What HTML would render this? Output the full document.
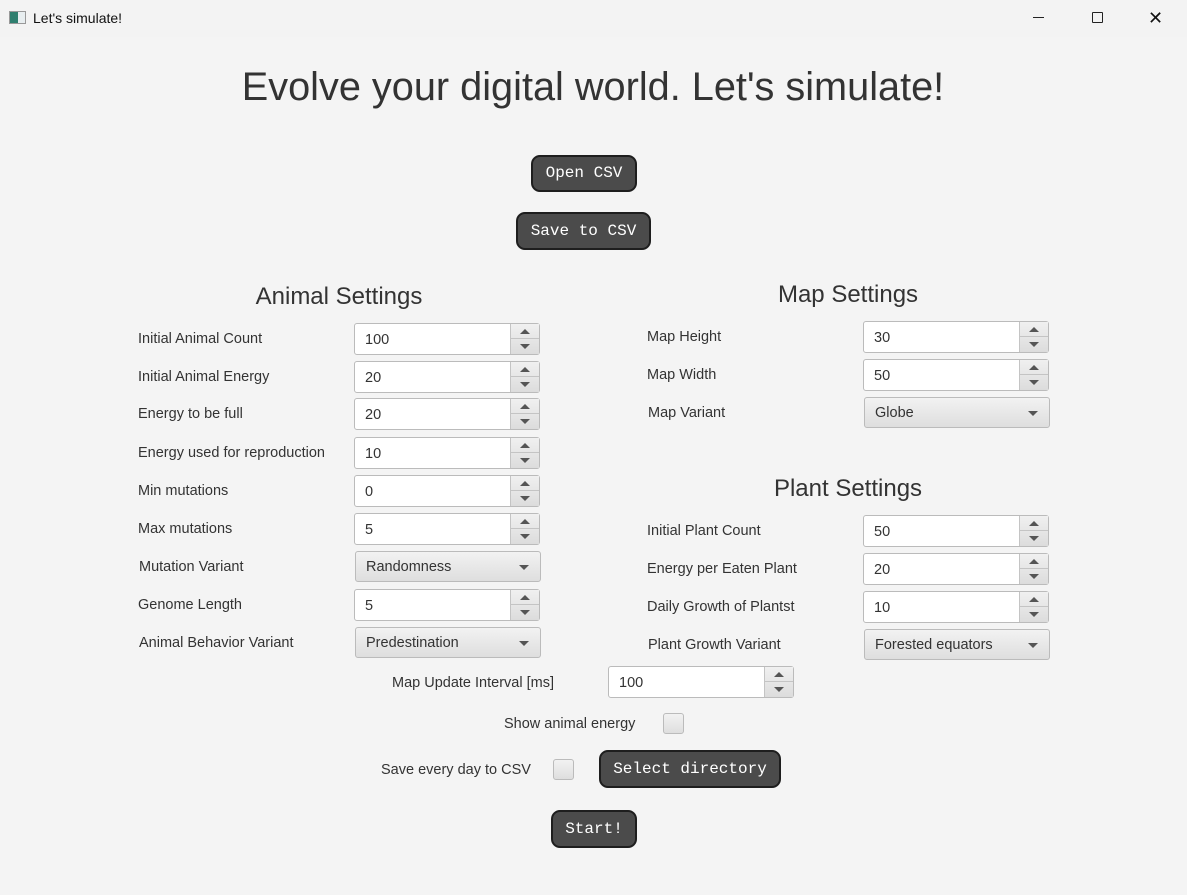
<!DOCTYPE html>
<html><head><meta charset="utf-8"><style>
*{box-sizing:border-box;margin:0;padding:0}
body{width:1187px;height:895px;background:#f4f4f4;font-family:"Liberation Sans","DejaVu Sans",sans-serif;position:relative;overflow:hidden;color:#333}
.tb{position:absolute;left:0;top:0;width:1187px;height:37px;background:#f3f3f3;font-size:14px;color:#111}
.a{position:absolute}
.lbl{position:absolute;font-size:14.5px;color:#333;white-space:nowrap;margin-top:1px}
.h{position:absolute;font-size:24px;color:#333;white-space:nowrap;transform:translateX(-50%)}
.sp{position:absolute;width:186px;height:32px;border:1px solid #bbb;border-radius:3px;background:#fff;}
.sp span{position:absolute;left:10px;top:8px;font-size:14.5px;color:#333}
.sp .ar{position:absolute;right:0;top:0;width:29px;height:30px;border-left:1px solid #c4c4c4;background:linear-gradient(#f0f0f0,#dcdcdc)}
.sp .ar:after{content:"";position:absolute;left:0;right:0;top:14px;border-top:1px solid #c4c4c4}
.up,.dn{position:absolute;left:9px;width:0;height:0;border-left:5px solid transparent;border-right:5px solid transparent}
.up{top:5px;border-bottom:5px solid #555}
.dn{top:20px;border-top:5px solid #555}
.cb{position:absolute;width:186px;height:31px;border:1px solid #bbb;border-radius:3px;background:linear-gradient(#f2f2f2,#dedede)}
.cb span{position:absolute;left:10px;top:7px;font-size:14.5px;color:#333}
.cb i{position:absolute;right:11px;top:13px;border-left:5px solid transparent;border-right:5px solid transparent;border-top:5px solid #555}
.btn{position:absolute;background:#4b4b4b;border:2px solid #1e1e1e;border-radius:9px;color:#fff;font-family:"Liberation Mono","DejaVu Sans Mono",monospace;font-size:16px;text-align:center}
.chk{position:absolute;width:21px;height:21px;border:1px solid #bbb;border-radius:3px;background:linear-gradient(#f2f2f2,#dedede)}
</style></head><body>
<div class="tb">
<div class="a" style="left:9px;top:11px;width:17px;height:13px;border:1px solid #999;background:linear-gradient(90deg,#2f7f6f 0 55%,#e8eef0 55%)"></div>
<div class="a" style="left:33px;top:10px">Let's simulate!</div>
<div class="a" style="left:1033px;top:17px;width:11px;border-top:1px solid #222"></div>
<div class="a" style="left:1092px;top:12px;width:11px;height:11px;border:1px solid #222;border-radius:1px"></div>
<div class="a" style="left:1148px;top:8px;font-size:18px;font-weight:300">✕</div>
</div>
<div class="h" style="left:593px;top:65px;font-size:39.7px">Evolve your digital world. Let's simulate!</div>
<div class="btn" style="left:531px;top:155px;width:106px;height:37px;line-height:33px">Open CSV</div>
<div class="btn" style="left:516px;top:212px;width:135px;height:38px;line-height:34px">Save to CSV</div>

<div class="h" style="left:339px;top:283px">Animal Settings</div>
<div class="h" style="left:848px;top:281px">Map Settings</div>
<div class="h" style="left:848px;top:475px">Plant Settings</div>

<div class="lbl" style="left:138px;top:330px">Initial Animal Count</div>
<div class="sp" style="left:354px;top:323px"><span>100</span><div class="ar"><b class="up"></b><b class="dn"></b></div></div>
<div class="lbl" style="left:138px;top:368px">Initial Animal Energy</div>
<div class="sp" style="left:354px;top:361px"><span>20</span><div class="ar"><b class="up"></b><b class="dn"></b></div></div>
<div class="lbl" style="left:138px;top:405px">Energy to be full</div>
<div class="sp" style="left:354px;top:398px"><span>20</span><div class="ar"><b class="up"></b><b class="dn"></b></div></div>
<div class="lbl" style="left:138px;top:444px">Energy used for reproduction</div>
<div class="sp" style="left:354px;top:437px"><span>10</span><div class="ar"><b class="up"></b><b class="dn"></b></div></div>
<div class="lbl" style="left:138px;top:482px">Min mutations</div>
<div class="sp" style="left:354px;top:475px"><span>0</span><div class="ar"><b class="up"></b><b class="dn"></b></div></div>
<div class="lbl" style="left:138px;top:520px">Max mutations</div>
<div class="sp" style="left:354px;top:513px"><span>5</span><div class="ar"><b class="up"></b><b class="dn"></b></div></div>
<div class="lbl" style="left:139px;top:558px">Mutation Variant</div>
<div class="cb" style="left:355px;top:551px"><span>Randomness</span><i></i></div>
<div class="lbl" style="left:138px;top:596px">Genome Length</div>
<div class="sp" style="left:354px;top:589px"><span>5</span><div class="ar"><b class="up"></b><b class="dn"></b></div></div>
<div class="lbl" style="left:139px;top:634px">Animal Behavior Variant</div>
<div class="cb" style="left:355px;top:627px"><span>Predestination</span><i></i></div>

<div class="lbl" style="left:647px;top:328px">Map Height</div>
<div class="sp" style="left:863px;top:321px"><span>30</span><div class="ar"><b class="up"></b><b class="dn"></b></div></div>
<div class="lbl" style="left:647px;top:366px">Map Width</div>
<div class="sp" style="left:863px;top:359px"><span>50</span><div class="ar"><b class="up"></b><b class="dn"></b></div></div>
<div class="lbl" style="left:648px;top:404px">Map Variant</div>
<div class="cb" style="left:864px;top:397px"><span>Globe</span><i></i></div>

<div class="lbl" style="left:647px;top:522px">Initial Plant Count</div>
<div class="sp" style="left:863px;top:515px"><span>50</span><div class="ar"><b class="up"></b><b class="dn"></b></div></div>
<div class="lbl" style="left:647px;top:560px">Energy per Eaten Plant</div>
<div class="sp" style="left:863px;top:553px"><span>20</span><div class="ar"><b class="up"></b><b class="dn"></b></div></div>
<div class="lbl" style="left:647px;top:598px">Daily Growth of Plantst</div>
<div class="sp" style="left:863px;top:591px"><span>10</span><div class="ar"><b class="up"></b><b class="dn"></b></div></div>
<div class="lbl" style="left:648px;top:636px">Plant Growth Variant</div>
<div class="cb" style="left:864px;top:629px"><span>Forested equators</span><i></i></div>

<div class="lbl" style="left:392px;top:674px">Map Update Interval [ms]</div>
<div class="sp" style="left:608px;top:666px"><span>100</span><div class="ar"><b class="up"></b><b class="dn"></b></div></div>

<div class="lbl" style="left:504px;top:715px">Show animal energy</div>
<div class="chk" style="left:663px;top:713px"></div>
<div class="lbl" style="left:381px;top:761px">Save every day to CSV</div>
<div class="chk" style="left:553px;top:759px"></div>
<div class="btn" style="left:599px;top:750px;width:182px;height:38px;line-height:34px">Select directory</div>
<div class="btn" style="left:551px;top:810px;width:86px;height:38px;line-height:34px">Start!</div>
</body></html>
